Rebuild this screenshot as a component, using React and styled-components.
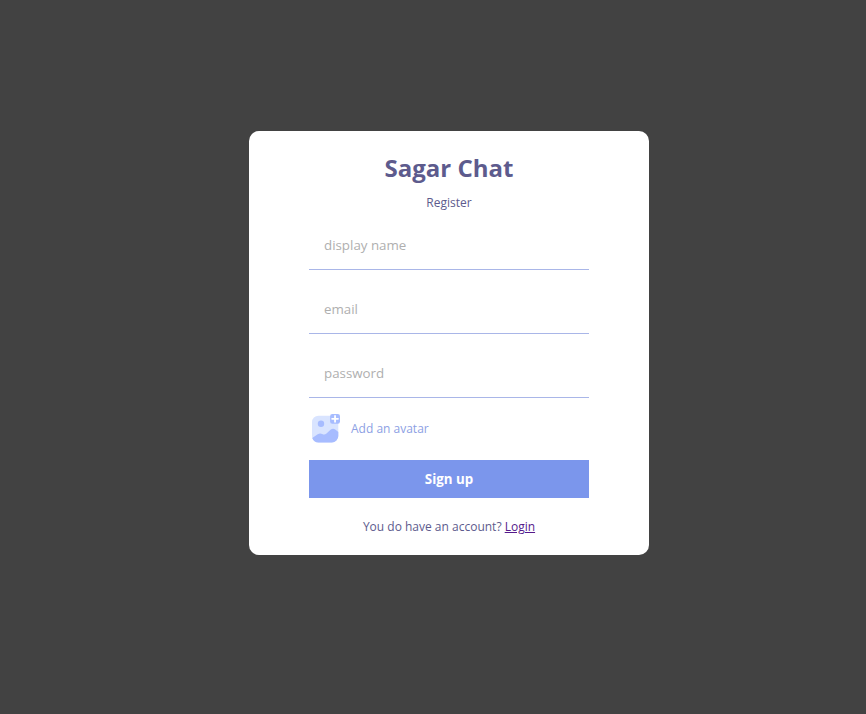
import React from 'react';
import styled, { createGlobalStyle } from 'styled-components';

const GlobalStyle = createGlobalStyle`
  body { margin: 0; background: #424242; }
  * { box-sizing: border-box; }
`;

const Page = styled.main`
  display: flex;
  justify-content: center;
  padding: 131px 0 0 32px;
  min-height: 714px;
  background: #424242;
  font-family: "Open Sans", sans-serif;
`;

const Card = styled.section`
  display: flex;
  flex-direction: column;
  align-items: center;
  gap: 10px;
  width: 400px;
  height: 424px;
  padding: 20px 60px;
  border-radius: 10px;
  background: #fff;
  color: #5d5b8d;
`;

const Title = styled.h1`
  margin: 0;
  font-size: 24px;
  line-height: 33px;
  font-weight: 700;
`;

const Caption = styled.span`
  font-size: 12px;
  line-height: 17px;
`;

const Form = styled.form`
  display: flex;
  flex-direction: column;
  gap: 15px;
  width: 280px;
`;

const Field = styled.input`
  width: 280px;
  height: 49px;
  padding: 15px;
  border: none;
  border-bottom: 1px solid #a9b6e8;
  border-radius: 0;
  font-family: inherit;
  font-size: 13.333px;
  outline: none;
  &::placeholder { color: rgb(175, 175, 175); }
`;

const AvatarPicker = styled.label`
  display: flex;
  align-items: center;
  gap: 10px;
  height: 32px;
  color: #8d9fe4;
  font-size: 12px;
`;

const AvatarText = styled.span`
  padding-bottom: 2px;
`;

const SubmitButton = styled.button`
  height: 38px;
  border: none;
  padding: 0;
  background: #7b96ec;
  color: #fff;
  font-family: inherit;
  font-size: 13.333px;
  font-weight: 700;
`;

const Footer = styled.p`
  margin: 10px 0 0;
  font-size: 12px;
  line-height: 17px;
`;

const Link = styled.a`
  color: #551a8b;
  text-decoration: underline;
`;

const PictureIcon = () => (
  <svg width="32" height="32" viewBox="0 0 32 32" aria-hidden="true">
    <rect x="3" y="2.700" width="26.300" height="26.800" rx="6.500" fill="#d9e4ff" />
    <circle cx="12" cy="10.700" r="3.200" fill="#a7bcff" />
    <path d="M3.200 25l5.500-3.700c1.700-1.100 2.900-1.200 4.500-.3 1.700.9 2.900.7 4.300-.6l4-3.600c1.700-1.500 3.400-1.500 5.100-.1l2.700 2.300V23a6.500 6.500 0 0 1-6.500 6.500H9.500c-3.200 0-5.500-1.800-6.300-4.500z" fill="#a7bcff" />
    <rect x="21.100" y="1" width="9.900" height="9.700" rx="2.200" fill="#a7bcff" />
    <path d="M26.050 2.900v5.900M23.100 5.850h5.900" stroke="#fff" strokeWidth="1.800" strokeLinecap="round" />
  </svg>
);

export default function App() {
  return (
    <Page>
      <GlobalStyle />
      <Card>
        <Title>Sagar Chat</Title>
        <Caption>Register</Caption>
        <Form>
          <Field type="text" placeholder="display name" />
          <Field type="email" placeholder="email" />
          <Field type="password" placeholder="password" />
          <AvatarPicker>
            <PictureIcon />
            <AvatarText>Add an avatar</AvatarText>
          </AvatarPicker>
          <SubmitButton type="button">Sign up</SubmitButton>
        </Form>
        <Footer>You do have an account? <Link href="#">Login</Link></Footer>
      </Card>
    </Page>
  );
}
